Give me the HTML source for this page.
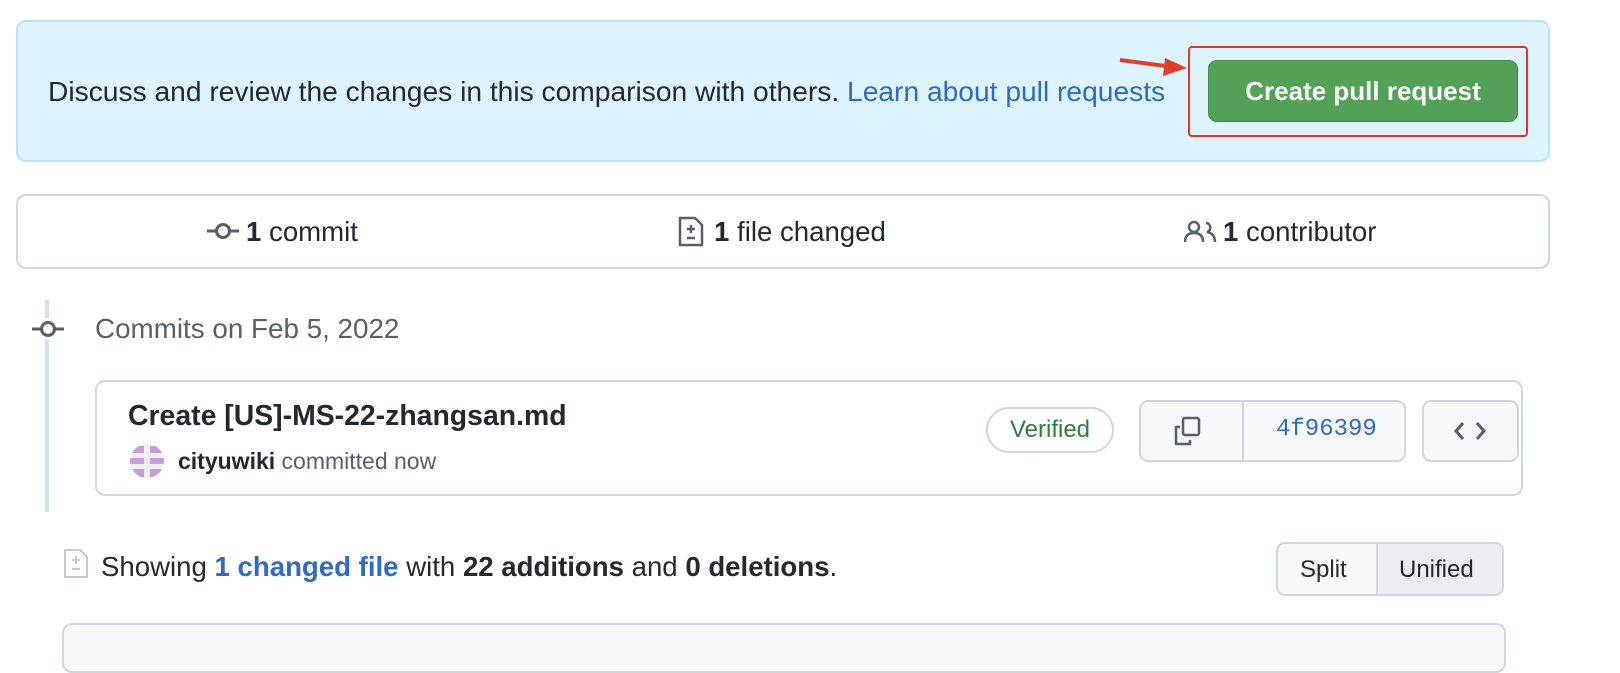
<!DOCTYPE html>
<html><head><meta charset="utf-8"><style>
*{box-sizing:border-box;margin:0;padding:0}
body{width:1620px;height:654px;overflow:hidden;background:#fff;font-family:"Liberation Sans",sans-serif;color:#24292f;position:relative}
.a{position:absolute}
.t{position:absolute;white-space:nowrap;line-height:1}
.bl{color:#2e6bc6}
</style></head><body>
<div class="a" style="left:16px;top:20px;width:1534px;height:142px;background:#ddf4ff;border:2px solid #b6e3ff;border-radius:10px"></div>
<div class="t" style="left:48px;top:77px;font-size:28.2px;color:#24292f">Discuss and review the changes in this comparison with others. <span class="bl">Learn about pull requests</span></div>
<svg class="a" style="left:1115px;top:52px" width="75" height="30"><path d="M5 8 L58 15" stroke="#e0402a" stroke-width="4"/><path d="M50 6 L72 16 L48 24 Z" fill="#e0402a"/></svg>
<div class="a" style="left:1188px;top:46px;width:340px;height:91px;border:2px solid #d9382a;border-radius:4px"></div>
<div class="a" style="left:1208px;top:60px;width:310px;height:62px;background:#53a156;border:1px solid #3f8a45;border-radius:9px;color:#fff;font-weight:bold;font-size:26px;text-align:center;line-height:60px">Create pull request</div>

<div class="a" style="left:16px;top:194px;width:1534px;height:75px;border:2px solid #d0d7de;border-radius:10px"></div>
<svg class="a" style="left:206px;top:221px" width="34" height="20"><path d="M1 10H10M24 10H33" stroke="#57606a" stroke-width="3"/><circle cx="17" cy="10" r="6.5" fill="none" stroke="#57606a" stroke-width="3"/></svg>
<div class="t" style="left:246px;top:218px;font-size:27.6px"><b>1</b> commit</div>
<svg class="a" style="left:677px;top:216px" width="28" height="32"><path d="M3 2H18L25 9V29H3Z" fill="none" stroke="#57606a" stroke-width="2.5" stroke-linejoin="round"/><path d="M14 9V17M10 13H18M10 22H18" stroke="#57606a" stroke-width="2.5"/></svg>
<div class="t" style="left:714px;top:218px;font-size:27.6px"><b>1</b> file changed</div>
<svg class="a" style="left:1184px;top:220px" width="34" height="24"><circle cx="10" cy="7" r="5" fill="none" stroke="#57606a" stroke-width="2.5"/><path d="M1 22C1 15 5 13 10 13C15 13 19 15 19 22" fill="none" stroke="#57606a" stroke-width="2.5"/><path d="M22 3C27 3 28 11 23 12C28 13 31 16 31 22" fill="none" stroke="#57606a" stroke-width="2.5"/></svg>
<div class="t" style="left:1223px;top:218px;font-size:27.6px"><b>1</b> contributor</div>

<div class="a" style="left:45px;top:300px;width:4px;height:212px;background:#d8dee4"></div>
<svg class="a" style="left:30px;top:318px" width="36" height="22"><rect x="0" y="0" width="36" height="22" fill="#fff"/><path d="M2 11H11M25 11H34" stroke="#57606a" stroke-width="3"/><circle cx="18" cy="11" r="6.5" fill="#fff" stroke="#57606a" stroke-width="3"/></svg>
<div class="t" style="left:95px;top:315px;font-size:27.8px;color:#57606a">Commits on Feb 5, 2022</div>

<div class="a" style="left:95px;top:380px;width:1428px;height:116px;border:2px solid #d0d7de;border-radius:10px;background:#fff"></div>
<div class="t" style="left:128px;top:402px;font-size:28.4px;font-weight:bold">Create [US]-MS-22-zhangsan.md</div>
<svg class="a" style="left:130px;top:444px" width="34" height="34"><defs><clipPath id="c"><circle cx="17" cy="17" r="17"/></clipPath></defs><g clip-path="url(#c)"><rect width="34" height="34" fill="#f0f0f0"/><rect x="0" y="2" width="14" height="7" fill="#c79ddc"/><rect x="20" y="2" width="14" height="7" fill="#c79ddc"/><rect x="0" y="14" width="14" height="6" fill="#c79ddc"/><rect x="20" y="14" width="14" height="6" fill="#c79ddc"/><rect x="0" y="25" width="14" height="8" fill="#c79ddc"/><rect x="20" y="25" width="14" height="8" fill="#c79ddc"/></g></svg>
<div class="t" style="left:178px;top:450px;font-size:23px;color:#57606a"><b style="color:#24292f">cityuwiki</b> committed now</div>
<div class="a" style="left:986px;top:407px;width:128px;height:46px;border:2px solid #d0d7de;border-radius:23px;color:#2f7d3a;font-size:24px;text-align:center;line-height:42px">Verified</div>
<div class="a" style="left:1139px;top:400px;width:267px;height:62px;border:2px solid #d0d7de;border-radius:9px;background:#f6f8fa"></div>
<div class="a" style="left:1242px;top:401px;width:2px;height:60px;background:#d0d7de"></div>
<svg class="a" style="left:1172px;top:415px" width="32" height="32"><path d="M8 12H4V29H18V25" fill="none" stroke="#57606a" stroke-width="2.5" stroke-linejoin="round"/><rect x="11" y="3" width="16" height="17" rx="2" fill="none" stroke="#57606a" stroke-width="2.5"/></svg>
<div class="t" style="left:1276px;top:418px;font-size:24px;font-family:'Liberation Mono',monospace;color:#2e6bc6">4f96399</div>
<div class="a" style="left:1422px;top:400px;width:97px;height:62px;border:2px solid #d0d7de;border-radius:9px;background:#f6f8fa"></div>
<svg class="a" style="left:1453px;top:420px" width="34" height="22"><path d="M10 3L3 11L10 19M24 3L31 11L24 19" fill="none" stroke="#57606a" stroke-width="3"/></svg>

<svg class="a" style="left:63px;top:548px" width="26" height="32"><path d="M2 2H17L24 9V29H2Z" fill="none" stroke="#c4c9cf" stroke-width="2"/><path d="M13 8V16M9 12H17M9 21H17" stroke="#c4c9cf" stroke-width="2"/></svg>
<div class="t" style="left:101px;top:553px;font-size:27.6px">Showing <b class="bl">1 changed file</b> with <b>22 additions</b> and <b>0 deletions</b>.</div>
<div class="a" style="left:1276px;top:542px;width:228px;height:54px;border:2px solid #d0d7de;border-radius:9px;background:#f6f8fa;overflow:hidden">
<div class="a" style="left:98px;top:0;width:130px;height:52px;background:#eaeef2;border-left:2px solid #d0d7de"></div>
<div class="t" style="left:22px;top:14px;font-size:24px">Split</div>
<div class="t" style="left:121px;top:14px;font-size:24px">Unified</div></div>
<div class="a" style="left:62px;top:623px;width:1444px;height:50px;border:2px solid #d0d7de;border-radius:10px;background:#f6f8fa"></div>
</body></html>
